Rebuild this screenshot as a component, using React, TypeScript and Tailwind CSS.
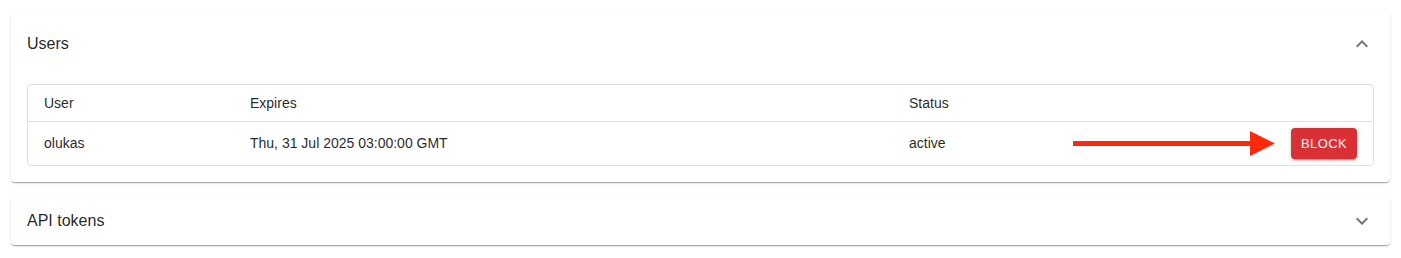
import React from "react";

const font = { fontFamily: '"Liberation Sans", Arial, sans-serif' };

function Chevron({ up }: { up?: boolean }) {
  return (
    <svg viewBox="0 0 24 24" className={`w-6 h-6 fill-[rgba(0,0,0,0.54)] ${up ? "rotate-180" : ""}`}>
      <path d="M16.59 8.59 12 13.17 7.41 8.59 6 10l6 6 6-6z" />
    </svg>
  );
}

const cardShadow =
  "shadow-[0px_2px_1px_-1px_rgba(0,0,0,0.2),0px_1px_1px_0px_rgba(0,0,0,0.14),0px_1px_3px_0px_rgba(0,0,0,0.12)]";

export default function App() {
  return (
    <div className="w-[1401px] h-[258px] bg-white overflow-hidden text-[rgba(0,0,0,0.87)]" style={font}>
      <div className="h-0 w-full shadow-[0_2px_4px_-1px_rgba(0,0,0,0.2),0_4px_5px_0_rgba(0,0,0,0.14),0_1px_10px_0_rgba(0,0,0,0.12)]" />
      <div className="px-[11px] pt-[12px] flex flex-col gap-[15px]">
        <div className={`bg-white rounded ${cardShadow}`}>
          <div className="h-16 flex items-center justify-between px-4">
            <span className="text-[16px] leading-6">Users</span>
            <Chevron up />
          </div>
          <div className="px-4 pt-2 pb-4">
            <div className="border border-[#e0e0e0] rounded">
              <div className="flex items-center h-[37px] text-[14px] border-b border-[#e0e0e0]">
                <div className="w-[206px] pl-4">User</div>
                <div className="w-[659px] pl-4">Expires</div>
                <div className="flex-1 pl-4">Status</div>
              </div>
              <div className="flex items-center h-[43px] text-[14px]">
                <div className="w-[206px] pl-4">olukas</div>
                <div className="w-[659px] pl-4">Thu, 31 Jul 2025 03:00:00 GMT</div>
                <div className="w-[160px] pl-4">active</div>
                <div className="flex-1 flex items-center justify-end pr-4">
                  <div className="flex items-center mr-[16px]">
                    <div className="w-[179px] h-[5px] bg-[#fe2a0b]" />
                    <svg width="25" height="25" viewBox="0 0 25 25" className="-ml-[2px]">
                      <polygon points="0,0 25,12.5 0,25" fill="#fe2a0b" />
                    </svg>
                  </div>
                  <button className="h-[31px] w-[66px] rounded bg-[#d93036] text-white text-[13px] tracking-[0.4px] uppercase shadow-[0px_3px_1px_-2px_rgba(0,0,0,0.2),0px_2px_2px_0px_rgba(0,0,0,0.14),0px_1px_5px_0px_rgba(0,0,0,0.12)]">
                    Block
                  </button>
                </div>
              </div>
            </div>
          </div>
        </div>
        <div className={`bg-white rounded ${cardShadow}`}>
          <div className="h-12 flex items-center justify-between px-4">
            <span className="text-[16px] leading-6">API tokens</span>
            <Chevron />
          </div>
        </div>
      </div>
    </div>
  );
}
